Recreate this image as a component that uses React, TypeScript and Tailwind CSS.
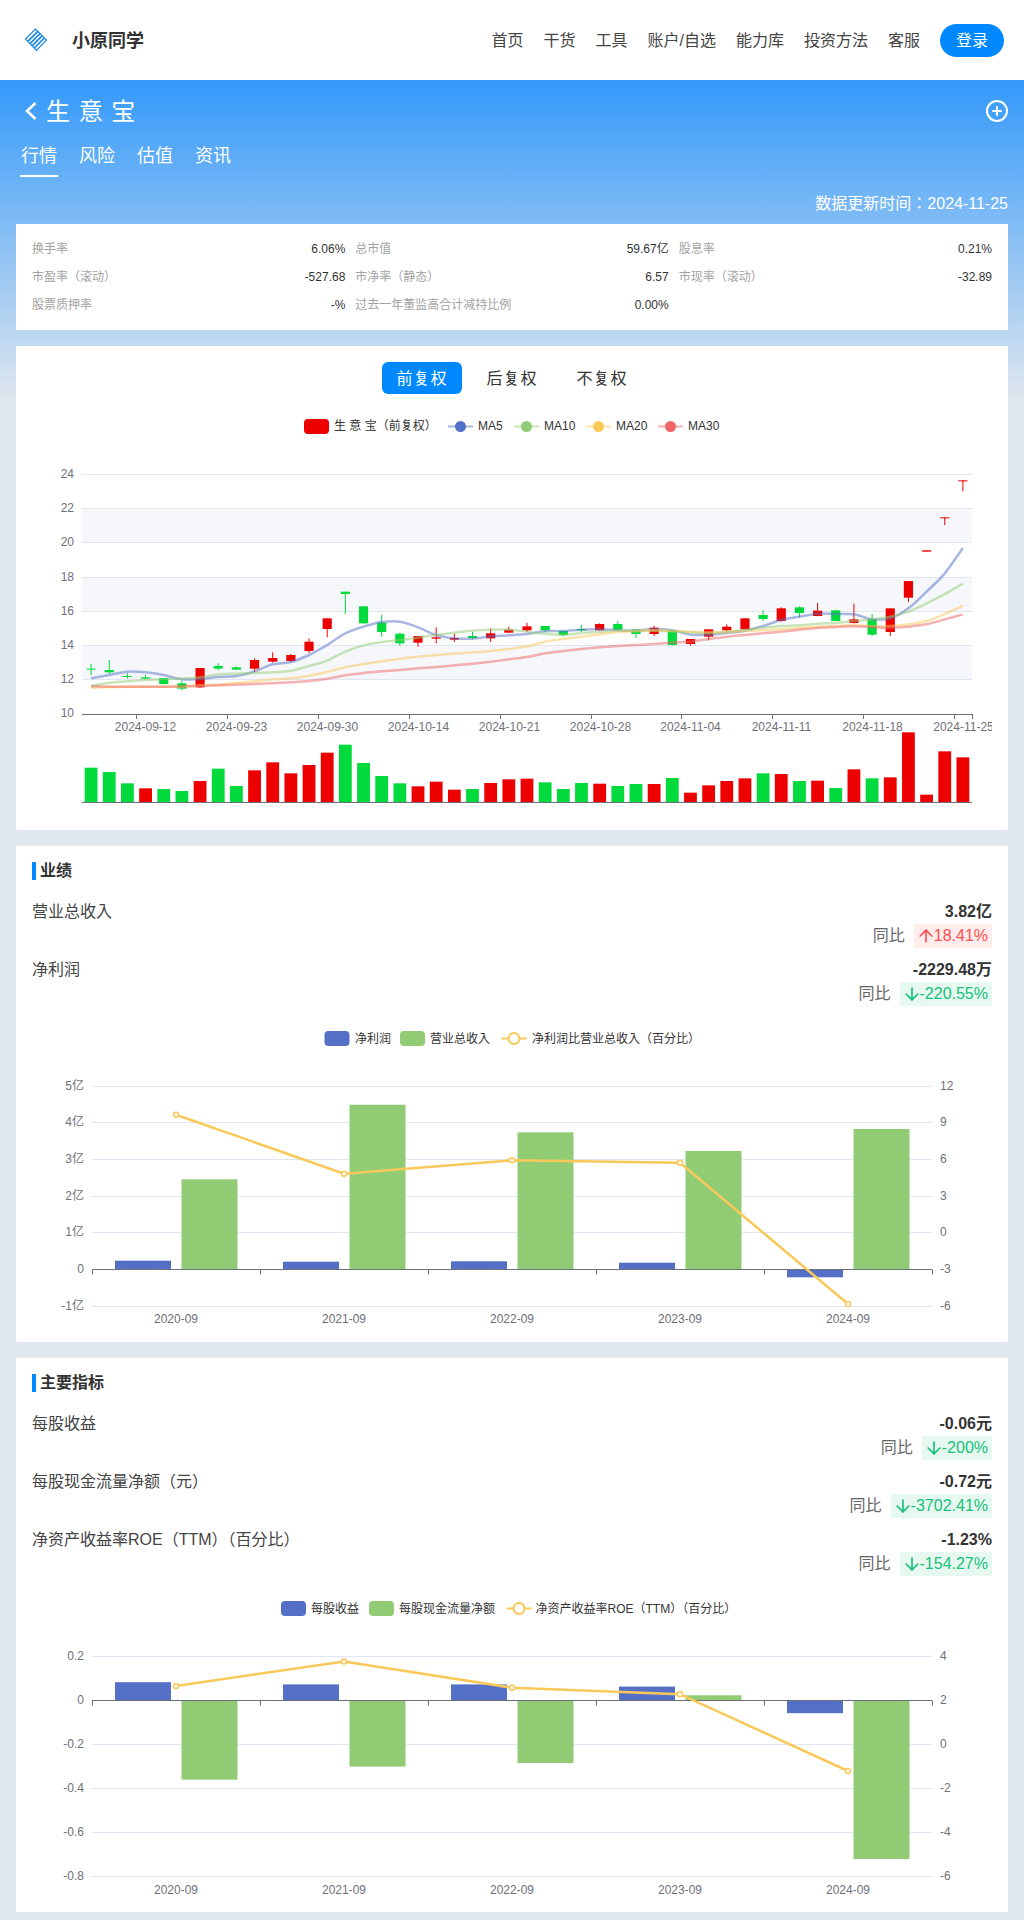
import { ArrowDown, ArrowUp, CirclePlus } from "lucide-react";

const NAV_ITEMS = ["首页", "干货", "工具", "账户/自选", "能力库", "投资方法", "客服"];
const TABS = ["行情", "风险", "估值", "资讯"];
const AXIS = "#6e7079";
const GRID = "#e0e6f1";
const RED = "#ec0000";
const GREEN = "#00da3c";
const BLUE_S = "#5470c6";
const GREEN_S = "#91cc75";
const YELLOW_S = "#fac858";
const RED_S = "#ee6666";

const QUOTES = [
	["换手率", "6.06%"],
	["总市值", "59.67亿"],
	["股息率", "0.21%"],
	["市盈率（滚动）", "-527.68"],
	["市净率（静态）", "6.57"],
	["市现率（滚动）", "-32.89"],
	["股票质押率", "-%"],
	["过去一年董监高合计减持比例", "0.00%"],
];

// candle rows, read off the picture at 3x: [bodyTop, bodyBottom, wickTop, wickBottom, up]
const CANDLES: [number, number, number, number, number][] = [
	[986, 989, 972, 1005, 0], [990, 997, 960, 1002, 0], [1008, 1011, 1000, 1016, 0], [1012, 1016, 1005, 1018, 0],
	[1014, 1032, 1014, 1034, 0], [1030, 1046, 1022, 1051, 0], [984, 1042, 984, 1044, 1], [978, 986, 970, 990, 0],
	[982, 989, 979, 990, 0], [960, 986, 955, 996, 1], [954, 965, 937, 968, 1], [945, 963, 942, 966, 1],
	[905, 933, 895, 939, 1], [835, 867, 835, 892, 1], [755, 762, 755, 822, 0], [799, 850, 799, 851, 0],
	[848, 876, 825, 890, 0], [881, 910, 878, 917, 0], [888, 908, 888, 920, 1], [892, 896, 862, 910, 1],
	[894, 899, 882, 906, 1], [888, 894, 876, 898, 0], [880, 895, 865, 906, 1], [869, 878, 860, 879, 1],
	[859, 871, 849, 876, 1], [858, 871, 858, 876, 0], [873, 885, 871, 889, 0], [867, 871, 855, 876, 0],
	[852, 871, 850, 872, 1], [852, 869, 843, 871, 0], [868, 882, 868, 894, 0], [863, 882, 857, 888, 1],
	[871, 915, 871, 917, 0], [897, 912, 897, 917, 1], [868, 890, 868, 901, 1], [860, 871, 853, 875, 1],
	[835, 868, 835, 869, 1], [825, 837, 811, 843, 0], [805, 843, 802, 845, 1], [802, 819, 799, 832, 0],
	[812, 828, 789, 829, 1], [811, 843, 809, 843, 0], [838, 849, 791, 851, 1], [837, 884, 822, 888, 0],
	[805, 876, 805, 888, 1], [723, 773, 723, 786, 1], [631, 635, 631, 635, 1], [532, 534, 532, 555, 1],
	[421, 423, 421, 454, 1],
];

const VOLUME_TOPS = [
	1283, 1296, 1330, 1345, 1347, 1353, 1323, 1286, 1338, 1291, 1267, 1300, 1275, 1238, 1214, 1269, 1308, 1330, 1339,
	1325, 1349, 1347, 1329, 1318, 1316, 1327, 1347, 1329, 1331, 1338, 1332, 1332, 1314, 1358, 1336, 1323, 1315, 1300,
	1302, 1323, 1322, 1344, 1288, 1315, 1312, 1177, 1364, 1234, 1252,
];
const VOLUME_UP = [
	0, 0, 0, 1, 0, 0, 1, 0, 0, 1, 1, 1, 1, 1, 0, 0, 0, 0, 1, 1, 1, 0, 1, 1, 1, 0, 0, 0, 1, 0, 0, 1, 0, 1, 1, 1, 1, 0, 1,
	0, 1, 0, 1, 0, 1, 1, 1, 1, 1,
];

const MA_LINES = [
	{
		color: BLUE_S,
		points: [
			1015, 1005, 995, 997, 1005, 1018, 1017, 1011, 1008, 994, 973, 966, 945, 915, 880, 860, 846, 845, 862, 885, 895,
			896, 889, 886, 882, 874, 873, 869, 868, 871, 872, 867, 871, 884, 884, 879, 872, 858, 840, 830, 821, 822, 823, 838,
			835, 805, 755, 700, 624,
		],
	},
	{
		color: GREEN_S,
		points: [
			1038, 1028, 1024, 1020, 1017, 1016, 1012, 1003, 1001, 999, 997, 992, 978, 962, 935, 916, 906, 900, 893, 885, 878,
			872, 869, 869, 875, 882, 884, 879, 875, 872, 873, 872, 873, 877, 879, 876, 870, 863, 858, 856, 851, 849, 843, 838,
			830, 815, 790, 762, 731,
		],
	},
	{
		color: YELLOW_S,
		points: [
			1044, 1041, 1040, 1040, 1040, 1040, 1036, 1034, 1029, 1024, 1018, 1015, 1007, 996, 982, 972, 964, 956, 950, 945,
			941, 937, 933, 927, 919, 905, 897, 890, 883, 876, 873, 871, 873, 875, 877, 876, 873, 871, 868, 864, 860, 858, 856,
			858, 858, 853, 843, 822, 797,
		],
	},
	{
		color: RED_S,
		points: [
			1039, 1040, 1040, 1040, 1040, 1039, 1038, 1036, 1034, 1032, 1030, 1027, 1023, 1016, 1006, 999, 994, 990, 985, 981,
			976, 971, 965, 958, 951, 940, 933, 927, 922, 918, 915, 912, 908, 905, 897, 890, 885, 880, 875, 869, 864, 861, 859,
			861, 864, 860, 853, 838, 823,
		],
	},
];

const KLINE_DATES = [
	"2024-09-12", "2024-09-23", "2024-09-30", "2024-10-14", "2024-10-21",
	"2024-10-28", "2024-11-04", "2024-11-11", "2024-11-18", "2024-11-25",
];
const YEARS = ["2020-09", "2021-09", "2022-09", "2023-09", "2024-09"];

const bandX = (i: number) => 82 + (i + 0.5) * 18.163;
const toY = (zoomY: number) => 340 + zoomY / 3;

function smoothPath(points: [number, number][]) {
	let d = `M${points[0][0]} ${points[0][1]}`;
	for (let i = 0; i < points.length - 1; i++) {
		const p0 = points[Math.max(i - 1, 0)];
		const p1 = points[i];
		const p2 = points[i + 1];
		const p3 = points[Math.min(i + 2, points.length - 1)];
		d += `C${p1[0] + (p2[0] - p0[0]) / 6} ${p1[1] + (p2[1] - p0[1]) / 6} ${p2[0] - (p3[0] - p1[0]) / 6} ${
			p2[1] - (p3[1] - p1[1]) / 6
		} ${p2[0]} ${p2[1]}`;
	}
	return d;
}

function Label({
	x,
	y,
	anchor = "start",
	fill = AXIS,
	children,
}: {
	x: number;
	y: number;
	anchor?: "start" | "middle" | "end";
	fill?: string;
	children: React.ReactNode;
}) {
	return (
		<text x={x} y={y + 4} textAnchor={anchor} fontSize={12} fill={fill}>
			{children}
		</text>
	);
}

function KLineChart() {
	const gridY = [474.5, 508.5, 542.5, 577.5, 611.5, 645.5, 679.5];
	const labels = ["24", "22", "20", "18", "16", "14", "12"];
	return (
		<svg viewBox="32 394 960 420" width={960} height={420} className="block">
			<rect x={304} y={419} width={25} height={15} rx={4} fill={RED} />
			<Label x={334} y={426} fill="#333">
				生 意 宝（前复权）
			</Label>
			{[
				{ name: "MA5", color: BLUE_S, x: 448 },
				{ name: "MA10", color: GREEN_S, x: 514 },
				{ name: "MA20", color: YELLOW_S, x: 586 },
				{ name: "MA30", color: RED_S, x: 658 },
			].map((item) => (
				<g key={item.name}>
					<line x1={item.x} x2={item.x + 25} y1={426.5} y2={426.5} stroke={item.color} strokeWidth={2} opacity={0.5} />
					<circle cx={item.x + 12.5} cy={426.5} r={5.5} fill={item.color} />
					<Label x={item.x + 30} y={426} fill="#333">
						{item.name}
					</Label>
				</g>
			))}

			{[0, 2, 4].map((n) => (
				<rect key={n} x={82} width={890} y={gridY[n + 1]} height={gridY[n + 2] - gridY[n + 1]} fill="#f6f7fb" />
			))}
			{gridY.map((y, i) => (
				<g key={y}>
					<line x1={82} x2={972} y1={y} y2={y} stroke={GRID} />
					<Label x={74} y={y - 1} anchor="end">
						{labels[i]}
					</Label>
				</g>
			))}
			<Label x={74} y={713} anchor="end">
				10
			</Label>
			<line x1={82} x2={972} y1={714.5} y2={714.5} stroke={AXIS} />
			{KLINE_DATES.map((date, i) => {
				const x = Math.round(82 + (3 + i * 5) * 18.163) + 0.5;
				return (
					<g key={date}>
						<line x1={x} x2={x} y1={714} y2={719} stroke={AXIS} />
						<Label x={x + 9} y={727} anchor="middle">
							{date}
						</Label>
					</g>
				);
			})}
			<line x1={972.5} x2={972.5} y1={714} y2={719} stroke={AXIS} />

			{CANDLES.map(([top, bottom, wickTop, wickBottom, up], i) => {
				const x = bandX(i);
				const color = up ? RED : GREEN;
				return (
					<g key={i}>
						<line x1={x} x2={x} y1={toY(wickTop)} y2={toY(wickBottom)} stroke={color} />
						<rect x={x - 4.6} width={9.2} y={toY(top)} height={Math.max((bottom - top) / 3, 1)} fill={color} />
					</g>
				);
			})}
			{MA_LINES.map((line) => (
				<path
					key={line.color}
					d={smoothPath(line.points.map((y, i) => [bandX(i), toY(y)]))}
					fill="none"
					stroke={line.color}
					strokeWidth={2.5}
					opacity={0.5}
				/>
			))}

			{VOLUME_TOPS.map((top, i) => (
				<rect
					key={i}
					x={bandX(i) - 6.4}
					width={12.8}
					y={toY(top)}
					height={802.3 - toY(top)}
					fill={VOLUME_UP[i] ? RED : GREEN}
				/>
			))}
			<line x1={82} x2={972} y1={802.5} y2={802.5} stroke={AXIS} />
		</svg>
	);
}

type ComboChartData = {
	top: number;
	legend: { rect1: number; text1: number; rect2: number; text2: number; line: number; text3: number };
	names: [string, string, string];
	grid: { y: number; left: string; right: string }[];
	zero: number;
	blue: number[];
	green: number[];
	line: number[];
	labelY: number;
};

function ComboChart({ data }: { data: ComboChartData }) {
	const { top, legend, names, grid, zero } = data;
	const legendY = top + 23.5;
	const centers = YEARS.map((_, i) => 176 + i * 168);
	return (
		<svg viewBox={`32 ${top} 960 311`} width={960} height={311} className="block">
			<rect x={legend.rect1} y={legendY - 7.5} width={25} height={15} rx={4} fill={BLUE_S} />
			<Label x={legend.text1} y={legendY} fill="#333">
				{names[0]}
			</Label>
			<rect x={legend.rect2} y={legendY - 7.5} width={25} height={15} rx={4} fill={GREEN_S} />
			<Label x={legend.text2} y={legendY} fill="#333">
				{names[1]}
			</Label>
			<line x1={legend.line} x2={legend.line + 25} y1={legendY} y2={legendY} stroke={YELLOW_S} strokeWidth={2} />
			<circle cx={legend.line + 12.5} cy={legendY} r={5.5} fill="#fff" stroke={YELLOW_S} strokeWidth={2} />
			<Label x={legend.text3} y={legendY} fill="#333">
				{names[2]}
			</Label>

			{grid.map((row) => (
				<g key={row.left}>
					{row.y !== zero && <line x1={92} x2={932} y1={row.y} y2={row.y} stroke={GRID} />}
					<Label x={84} y={row.y - 1} anchor="end">
						{row.left}
					</Label>
					<Label x={940} y={row.y - 1}>
						{row.right}
					</Label>
				</g>
			))}

			{centers.map((x, i) => {
				const blueTop = Math.min(data.blue[i], zero);
				return (
					<g key={x}>
						<rect x={x - 61} width={56} y={blueTop} height={Math.abs(data.blue[i] - zero)} fill={BLUE_S} />
						<rect
							x={x + 5.5}
							width={56}
							y={Math.min(data.green[i], zero)}
							height={Math.abs(data.green[i] - zero)}
							fill={GREEN_S}
						/>
						<Label x={x} y={data.labelY} anchor="middle">
							{YEARS[i]}
						</Label>
					</g>
				);
			})}
			<line x1={92} x2={932} y1={zero} y2={zero} stroke={AXIS} />
			{[92, 260, 428, 596, 764, 932].map((x) => (
				<line key={x} x1={x + 0.5} x2={x + 0.5} y1={zero} y2={zero + 5} stroke={AXIS} />
			))}
			<polyline
				points={centers.map((x, i) => `${x},${data.line[i]}`).join(" ")}
				fill="none"
				stroke={YELLOW_S}
				strokeWidth={2.5}
			/>
			{centers.map((x, i) => (
				<circle key={x} cx={x} cy={data.line[i]} r={2.5} fill="#fff" stroke={YELLOW_S} strokeWidth={1.5} />
			))}
		</svg>
	);
}

const PERFORMANCE_CHART: ComboChartData = {
	top: 1015,
	legend: { rect1: 324.5, text1: 355, rect2: 400, text2: 430, line: 501.5, text3: 532 },
	names: ["净利润", "营业总收入", "净利润比营业总收入（百分比）"],
	grid: [
		{ y: 1086.5, left: "5亿", right: "12" },
		{ y: 1122.5, left: "4亿", right: "9" },
		{ y: 1159.5, left: "3亿", right: "6" },
		{ y: 1196.5, left: "2亿", right: "3" },
		{ y: 1232.5, left: "1亿", right: "0" },
		{ y: 1269.5, left: "0", right: "-3" },
		{ y: 1306.5, left: "-1亿", right: "-6" },
	],
	zero: 1269.5,
	blue: [1260.7, 1261.7, 1261.3, 1262.7, 1277.3],
	green: [1179.3, 1104.7, 1132.3, 1151, 1129],
	line: [1114.7, 1173.7, 1160.3, 1162.7, 1304],
	labelY: 1319,
};

const INDICATOR_CHART: ComboChartData = {
	top: 1585,
	legend: { rect1: 281, text1: 311, rect2: 369, text2: 399, line: 506.5, text3: 535.5 },
	names: ["每股收益", "每股现金流量净额", "净资产收益率ROE（TTM）（百分比）"],
	grid: [
		{ y: 1656.5, left: "0.2", right: "4" },
		{ y: 1700.5, left: "0", right: "2" },
		{ y: 1744.5, left: "-0.2", right: "0" },
		{ y: 1788.5, left: "-0.4", right: "-2" },
		{ y: 1832.5, left: "-0.6", right: "-4" },
		{ y: 1876.5, left: "-0.8", right: "-6" },
	],
	zero: 1700.5,
	blue: [1682.2, 1684.4, 1684.4, 1686.6, 1713.2],
	green: [1779.7, 1766.6, 1763, 1695.3, 1859],
	line: [1685.9, 1661.5, 1687.7, 1694.2, 1771],
	labelY: 1889.5,
};

function MetricRow({ label, value, change }: { label: string; value: string; change: string }) {
	const isUp = !change.startsWith("-");
	const Arrow = isUp ? ArrowUp : ArrowDown;
	return (
		<div className="mb-[9px] flex h-[49px] items-start justify-between text-base leading-6 text-[#333]">
			<span className="pt-px text-[#444]">{label}</span>
			<div className="flex flex-col items-end">
				<span className="h-[25px] pt-px font-bold">{value}</span>
				<div className="flex items-center gap-[9px]">
					<span className="text-[#666]">同比</span>
					<span
						className={`flex h-6 items-center pr-1 pl-0.5 ${
							isUp ? "bg-[#ffecec] text-[#ff4d4f]" : "bg-[#e7f8f0] text-[#14c27a]"
						}`}
					>
						<Arrow size={20} strokeWidth={2} className="mr-[-2px]" />
						{change}
					</span>
				</div>
			</div>
		</div>
	);
}

function SectionTitle({ children }: { children: string }) {
	return (
		<div className="mb-[19px] flex h-[18px] items-center">
			<span className="h-[18px] w-1 bg-[#0089ff]" />
			<h2 className="ml-1 text-base font-bold text-[#333]">{children}</h2>
		</div>
	);
}

export default function App() {
	return (
		<div className="min-h-[1920px] bg-[#e0e7ef] [font-family:'Liberation_Sans','Noto_Sans_CJK_JP',sans-serif]">
			<header className="flex h-20 items-center bg-white pr-5 pl-6">
				<svg width={26} height={26} viewBox="24 27 26 26" fill="none" stroke="#1e88e5">
					<polygon points="25.5,39 35.5,29 46.5,40 36.5,50.5" strokeWidth={1.2} />
					{[1, 2, 3, 4].map((k) => (
						<line key={k} x1={26 + k * 2.1} y1={39 + k * 2.2} x2={36 + k * 2.1} y2={29 + k * 2.2} strokeWidth={1.7} />
					))}
				</svg>
				<span className="ml-[22px] pt-0.5 text-lg font-bold text-[#333]">小原同学</span>
				<nav className="ml-auto flex items-center gap-5 text-base text-[#444]">
					{NAV_ITEMS.map((item) => (
						<a key={item} className="pt-0.5">
							{item}
						</a>
					))}
					<button className="h-[33px] w-16 rounded-full bg-[#0089ff] pt-0.5 text-white">登录</button>
				</nav>
			</header>

			<div className="bg-[linear-gradient(to_bottom,#3399fa_0px,#e0e7ef_320px)] px-4 pt-[15px]">
				<div className="flex h-8 items-center justify-between pl-2">
					<div className="flex items-center text-2xl text-white">
						<svg width={14} height={18} viewBox="0 0 14 18" fill="none" stroke="#fff" strokeWidth={2.6}>
							<polyline points="11.5,1 3,9 11.5,17" />
						</svg>
						<span className="ml-2 pt-0.5 [word-spacing:2px]">生 意 宝</span>
					</div>
					<CirclePlus size={24} color="#fff" className="mr-[-1px]" />
				</div>
				<div className="mt-3 ml-1 flex gap-5 text-lg text-white">
					{TABS.map((tab, i) => (
						<span key={tab} className={`h-[38px] px-px leading-[34px] ${i === 0 ? "border-b-2 border-white" : ""}`}>
							{tab}
						</span>
					))}
				</div>
				<div className="mt-[15px] mb-2 text-right text-base leading-6 text-white">数据更新时间：2024-11-25</div>

				<section className="grid grid-cols-3 gap-x-[10px] bg-white px-4 pt-[11px] pb-[11px] text-xs leading-7">
					{QUOTES.map(([label, value]) => (
						<div key={label} className="flex justify-between">
							<span className="text-[#a3a3a3]">{label}</span>
							<span className="text-[#333]">{value}</span>
						</div>
					))}
				</section>

				<section className="mt-4 bg-white p-4">
					<div className="flex justify-center gap-2.5 text-base tracking-[1px] text-[#333]">
						<button className="h-8 w-20 rounded-md bg-[#0089ff] pt-0.5 text-white">前复权</button>
						<button className="h-8 w-20 pt-0.5">后复权</button>
						<button className="h-8 w-20 pt-0.5">不复权</button>
					</div>
					<KLineChart />
				</section>

				<section className="mt-4 bg-white p-4">
					<SectionTitle>业绩</SectionTitle>
					<MetricRow label="营业总收入" value="3.82亿" change="18.41%" />
					<MetricRow label="净利润" value="-2229.48万" change="-220.55%" />
					<ComboChart data={PERFORMANCE_CHART} />
				</section>

				<section className="mt-4 bg-white p-4">
					<SectionTitle>主要指标</SectionTitle>
					<MetricRow label="每股收益" value="-0.06元" change="-200%" />
					<MetricRow label="每股现金流量净额（元）" value="-0.72元" change="-3702.41%" />
					<MetricRow label="净资产收益率ROE（TTM）（百分比）" value="-1.23%" change="-154.27%" />
					<ComboChart data={INDICATOR_CHART} />
				</section>
			</div>
		</div>
	);
}
